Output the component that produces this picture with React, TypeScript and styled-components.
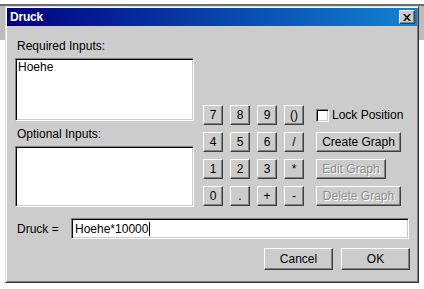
import * as React from 'react';
import styled, { createGlobalStyle, css } from 'styled-components';

const GlobalStyle = createGlobalStyle`
  body {
    margin: 0;
    background: #ffffff;
    font-family: 'Liberation Sans', Arial, sans-serif;
    font-size: 12px;
  }
`;

const FACE = '#cccccc';

const raised = css`
  border: 1px solid;
  border-color: #ffffff #404040 #404040 #ffffff;
  box-shadow: inset -1px -1px #808080;
`;

const sunken = css`
  border: 1px solid;
  border-color: #808080 #ffffff #ffffff #808080;
  box-shadow: inset 1px 1px #000000, inset -1px -1px ${FACE};
`;

const keys = ['7', '8', '9', '()', '4', '5', '6', '/', '1', '2', '3', '*', '0', '.', '+', '-'];

export default function App() {
  const [locked, setLocked] = React.useState(false);
  const [formula, setFormula] = React.useState('Hoehe*10000');

  return (
    <>
      <GlobalStyle />
      <Desktop>
        <BackWindow />
        <Dialog>
          <TitleBar>
            <TitleText>Druck</TitleText>
            <CloseButton aria-label="close">
              <svg width="8" height="7" viewBox="0 0 8 7">
                <path d="M0 0h2l2 2.2L6 0h2L5 3.5 8 7H6L4 4.8 2 7H0l3-3.5z" fill="#000" />
              </svg>
            </CloseButton>
          </TitleBar>
          <Body>
            <TopArea>
              <LeftColumn>
                <FieldLabel>Required Inputs:</FieldLabel>
                <ListBox $height={63}>
                  <ListItem>Hoehe</ListItem>
                </ListBox>
                <FieldLabel $spaced>Optional Inputs:</FieldLabel>
                <ListBox $height={61} />
              </LeftColumn>
              <Keypad>
                {keys.map(k => (
                  <KeyButton key={k} onClick={() => setFormula(f => f + k)}>
                    {k}
                  </KeyButton>
                ))}
              </Keypad>
              <SideColumn>
                <CheckRow onClick={() => setLocked(l => !l)}>
                  <CheckBox>{locked && '✓'}</CheckBox>
                  Lock Position
                </CheckRow>
                <Button $width={85}>Create Graph</Button>
                <Button $width={70} disabled>
                  Edit Graph
                </Button>
                <Button $width={85} disabled>
                  Delete Graph
                </Button>
              </SideColumn>
            </TopArea>
            <FormulaRow>
              <FormulaLabel>Druck =</FormulaLabel>
              <FormulaInput>
                {formula}
                <Caret />
              </FormulaInput>
            </FormulaRow>
            <ButtonRow>
              <Button $width={69} $height={22}>
                Cancel
              </Button>
              <Button $width={69} $height={22}>
                OK
              </Button>
            </ButtonRow>
          </Body>
        </Dialog>
      </Desktop>
    </>
  );
}

const Desktop = styled.div`
  position: relative;
  width: 424px;
  height: 289px;
  overflow: hidden;
`;

const BackWindow = styled.div`
  position: absolute;
  left: 0;
  right: 0;
  top: 4px;
  height: 34px;
  border-top: 2px solid #6e6e6e;
  background: #bdbdbd;
`;

const Dialog = styled.div`
  position: absolute;
  left: 5px;
  top: 6px;
  width: 414px;
  height: 277px;
  box-sizing: border-box;
  display: flex;
  flex-direction: column;
  padding: 1px;
  background: ${FACE};
  border: 1px solid;
  border-color: #dcdcdc #303030 #303030 #dcdcdc;
  box-shadow: inset 1px 1px #ffffff, inset -1px -1px #808080;
`;

const TitleBar = styled.div`
  height: 18px;
  display: flex;
  align-items: center;
  justify-content: space-between;
  padding: 0 2px 0 3px;
  background: linear-gradient(to right, #000080, #1084d0);
`;

const TitleText = styled.span`
  color: #ffffff;
  font-weight: bold;
  font-size: 12px;
  letter-spacing: -0.2px;
`;

const CloseButton = styled.button`
  width: 16px;
  height: 14px;
  padding: 0;
  display: flex;
  align-items: center;
  justify-content: center;
  background: ${FACE};
  ${raised};
`;

const Body = styled.div`
  flex: 1;
  display: flex;
  flex-direction: column;
  padding: 13px 7px 9px 8px;
`;

const TopArea = styled.div`
  display: flex;
  align-items: flex-end;
`;

const LeftColumn = styled.div`
  width: 179px;
  display: flex;
  flex-direction: column;
`;

const FieldLabel = styled.div<{ $spaced?: boolean }>`
  height: 14px;
  line-height: 14px;
  padding-left: 2px;
  margin-top: ${p => (p.$spaced ? 6 : 0)}px;
  margin-bottom: 5px;
  color: #000000;
`;

const ListBox = styled.div<{ $height: number }>`
  height: ${p => p.$height}px;
  box-sizing: border-box;
  padding: 1px;
  background: #ffffff;
  ${sunken};
`;

const ListItem = styled.div`
  height: 14px;
  line-height: 14px;
  padding-left: 1px;
  color: #000000;
`;

const Keypad = styled.div`
  margin-left: 9px;
  margin-bottom: 1px;
  display: grid;
  grid-template-columns: repeat(4, 20px);
  grid-auto-rows: 20px;
  gap: 7px;
`;

const Button = styled.button<{ $width?: number; $height?: number }>`
  width: ${p => p.$width ?? 20}px;
  height: ${p => p.$height ?? 20}px;
  box-sizing: border-box;
  padding: 0;
  font-family: 'Liberation Sans', Arial, sans-serif;
  font-size: 12px;
  color: #000000;
  background: ${FACE};
  ${raised};

  &:disabled {
    color: #8c8c8c;
    text-shadow: 1px 1px #ffffff;
  }
`;

const KeyButton = styled(Button)`
  width: 20px;
  height: 20px;
`;

const SideColumn = styled.div`
  margin-left: 12px;
  margin-bottom: 1px;
  display: flex;
  flex-direction: column;
  align-items: flex-start;
  gap: 7px;
`;

const CheckRow = styled.label`
  height: 20px;
  display: flex;
  align-items: center;
  gap: 3px;
  color: #000000;
  cursor: default;
`;

const CheckBox = styled.span`
  width: 13px;
  height: 13px;
  box-sizing: border-box;
  display: inline-flex;
  align-items: center;
  justify-content: center;
  font-size: 10px;
  background: #ffffff;
  ${sunken};
`;

const FormulaRow = styled.div`
  margin-top: 11px;
  height: 21px;
  display: flex;
  align-items: center;
`;

const FormulaLabel = styled.span`
  width: 56px;
  padding-left: 2px;
  box-sizing: border-box;
  color: #000000;
`;

const FormulaInput = styled.div`
  flex: 1;
  height: 21px;
  margin-right: 1px;
  box-sizing: border-box;
  display: flex;
  align-items: center;
  padding-left: 3px;
  background: #ffffff;
  color: #000000;
  ${sunken};
`;

const Caret = styled.span`
  width: 0;
  height: 14px;
  margin-left: 1px;
  border-left: 1px solid #000000;
`;

const ButtonRow = styled.div`
  margin-top: 9px;
  display: flex;
  justify-content: flex-end;
  gap: 8px;
`;
